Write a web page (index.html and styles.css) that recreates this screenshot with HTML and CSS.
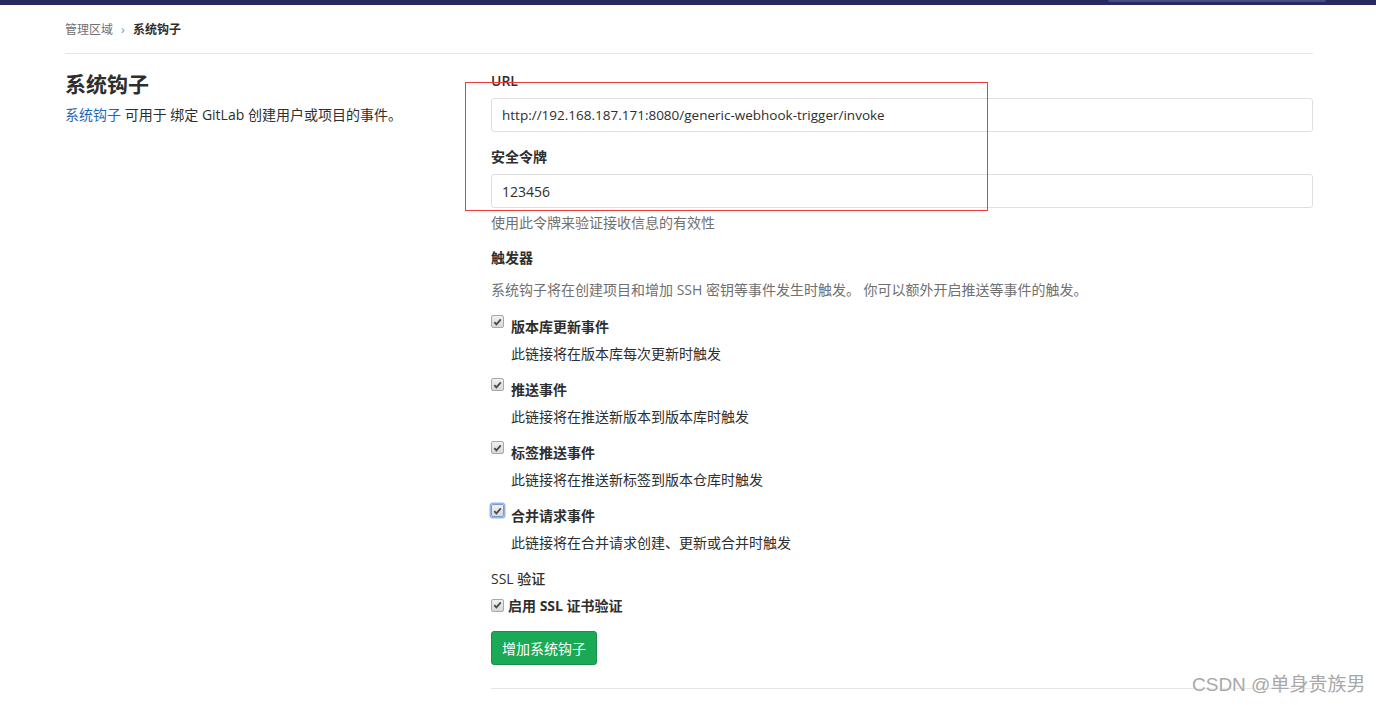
FILE: index.html
```html
<!DOCTYPE html>
<html lang="zh">
<head>
<meta charset="utf-8">
<title>系统钩子</title>
<link rel="stylesheet" href="styles.css">
</head>
<body>
<header class="topbar"><div class="search-edge"></div></header>
<div class="container">
  <nav class="breadcrumb">
    <a class="crumb" href="#">管理区域</a>
    <span class="sep">›</span>
    <span class="crumb-current">系统钩子</span>
  </nav>
  <div class="row">
    <div class="col-left">
      <h4 class="title">系统钩子</h4>
      <p class="lead"><a href="#" class="link">系统钩子</a> 可用于 绑定 GitLab 创建用户或项目的事件。</p>
    </div>
    <div class="col-right">
      <label class="label label-url">URL</label>
      <div class="input input-url">http://192.168.187.171:8080/generic-webhook-trigger/invoke</div>
      <label class="label label-token">安全令牌</label>
      <div class="input">123456</div>
      <p class="help help-token">使用此令牌来验证接收信息的有效性</p>
      <div class="label label-trigger">触发器</div>
      <p class="help help-trigger">系统钩子将在创建项目和增加 SSH 密钥等事件发生时触发。 你可以额外开启推送等事件的触发。</p>

      <div class="check-row">
        <span class="cb"><svg viewBox="0 0 12 12" width="12" height="12"><path d="M2.5 6.2 L4.8 8.6 L9.6 3.2" fill="none" stroke="#4a4a4a" stroke-width="2"/></svg></span>
        <span class="check-label">版本库更新事件</span>
      </div>
      <p class="check-help">此链接将在版本库每次更新时触发</p>

      <div class="check-row">
        <span class="cb"><svg viewBox="0 0 12 12" width="12" height="12"><path d="M2.5 6.2 L4.8 8.6 L9.6 3.2" fill="none" stroke="#4a4a4a" stroke-width="2"/></svg></span>
        <span class="check-label">推送事件</span>
      </div>
      <p class="check-help">此链接将在推送新版本到版本库时触发</p>

      <div class="check-row">
        <span class="cb"><svg viewBox="0 0 12 12" width="12" height="12"><path d="M2.5 6.2 L4.8 8.6 L9.6 3.2" fill="none" stroke="#4a4a4a" stroke-width="2"/></svg></span>
        <span class="check-label">标签推送事件</span>
      </div>
      <p class="check-help">此链接将在推送新标签到版本仓库时触发</p>

      <div class="check-row">
        <span class="cb cb-focus"><svg viewBox="0 0 12 12" width="12" height="12"><path d="M2.5 6.2 L4.8 8.6 L9.6 3.2" fill="none" stroke="#4a4a4a" stroke-width="2"/></svg></span>
        <span class="check-label">合并请求事件</span>
      </div>
      <p class="check-help">此链接将在合并请求创建、更新或合并时触发</p>

      <div class="ssl-title">SSL 验证</div>
      <div class="ssl-row">
        <span class="cb cb-ssl"><svg viewBox="0 0 12 12" width="12" height="12"><path d="M2.5 6.2 L4.8 8.6 L9.6 3.2" fill="none" stroke="#4a4a4a" stroke-width="2"/></svg></span>
        <span class="ssl-label">启用 SSL 证书验证</span>
      </div>
      <button class="btn-success">增加系统钩子</button>
      <hr class="bottom-rule">
    </div>
  </div>
</div>
<div class="annotation"></div>
<div class="watermark">CSDN @单身贵族男</div>
</body>
</html>
```

FILE: styles.css
```css
* { box-sizing: border-box; }
html, body { margin: 0; padding: 0; background: #fff; }
body {
  font-family: "Open Sans", "Noto Sans CJK SC", sans-serif;
  font-size: 14px;
  color: #2e2e2e;
  position: relative;
  min-height: 705px;
  overflow: hidden;
}
.topbar {
  height: 5px;
  background: #292961;
  position: relative;
}
.search-edge {
  position: absolute;
  left: 1108px;
  width: 218px;
  top: 0;
  height: 2px;
  background: #4b4b86;
  border-radius: 0 0 3px 3px;
}
.container {
  margin-left: 65px;
  width: 1248px;
}
.breadcrumb {
  height: 49px;
  border-bottom: 1px solid #e5e5e5;
  display: flex;
  align-items: center;
  font-size: 12px;
  padding-bottom: 1px;
}
.crumb { color: #707070; text-decoration: none; }
.sep { color: #949494; margin: 0 8px 0 8px; font-size: 13px; }
.crumb-current { font-weight: 700; color: #2e2e2e; }
.row {
  display: grid;
  grid-template-columns: 426px 822px;
}
.title {
  margin: 18px 0 0;
  font-size: 21px;
  line-height: 24px;
  font-weight: 700;
  color: #2e2e2e;
}
.lead {
  margin: 10px 0 0;
  line-height: 18px;
}
.link { color: #1b69b6; text-decoration: none; }
.label {
  display: block;
  font-weight: 700;
  line-height: 18px;
}
.label-url { margin-top: 18px; font-weight: 600; }
.label-token { margin-top: 16px; }
.label-trigger { margin-top: 17px; }
.input {
  margin-top: 8px;
  height: 34px;
  border: 1px solid #dfdfdf;
  border-radius: 3px;
  padding: 0 10px;
  display: flex;
  align-items: center;
  color: #2e2e2e;
}
.input-url { font-size: 13.5px; }
.help {
  margin: 6px 0 0;
  line-height: 18px;
  color: #707070;
}
.help-trigger { margin-top: 14px; }
.check-row {
  display: flex;
  align-items: flex-start;
  margin-top: 19px;
  height: 18px;
}
.check-help + .check-row { margin-top: 18px; }
.cb {
  width: 13px;
  height: 13px;
  border: 1px solid #a8a8a8;
  border-radius: 2px;
  background: linear-gradient(#f0f0f0, #d8d8d8);
  display: flex;
  align-items: center;
  justify-content: center;
  margin-top: -3px;
  flex: none;
}
.cb svg { display: block; }
.cb-focus {
  box-shadow: 0 0 0 1.5px #8fb4f0;
  border-color: #7a9bd0;
}
.check-label {
  margin-left: 7px;
  font-weight: 700;
  line-height: 18px;
}
.check-help {
  margin: 9px 0 0 20px;
  line-height: 18px;
  color: #2e2e2e;
}
.ssl-title {
  margin-top: 18px;
  line-height: 18px;
  font-weight: 500;
}
.ssl-row {
  display: flex;
  align-items: center;
  margin-top: 8px;
  height: 18px;
}
.cb-ssl { margin-top: 0; }
.ssl-label {
  margin-left: 4px;
  font-weight: 700;
}
.btn-success {
  display: block;
  margin-top: 17px;
  height: 34px;
  padding: 0 10px;
  background: #1aaa55;
  border: 1px solid #168f48;
  border-radius: 3px;
  color: #fff;
  font-family: inherit;
  font-size: 14px;
}
.bottom-rule {
  margin: 23px 0 0;
  border: 0;
  border-top: 1px solid #e5e5e5;
}
.annotation {
  position: absolute;
  left: 465px;
  top: 82px;
  width: 523px;
  height: 129px;
  border: 1px solid #f03c3c;
  pointer-events: none;
}
.watermark {
  position: absolute;
  left: 1192px;
  top: 673px;
  font-family: "Liberation Sans", "Noto Sans CJK SC", sans-serif;
  font-size: 19px;
  line-height: 24px;
  color: #a8a8a8;
  text-shadow: 0 0 2px #fff, 0 0 2px #fff;
}
```
